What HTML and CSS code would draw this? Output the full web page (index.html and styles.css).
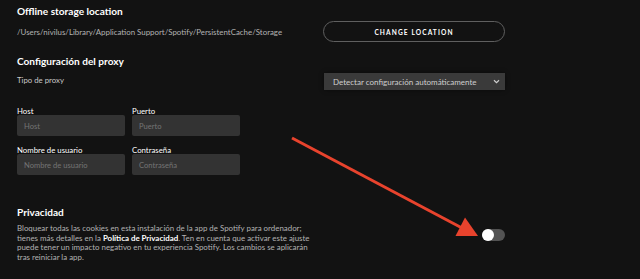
FILE: index.html
```html
<!DOCTYPE html>
<html lang="es">
<head>
<meta charset="utf-8">
<link rel="stylesheet" href="styles.css">
</head>
<body>
<div class="page">
  <section class="section">
    <h2 class="heading">Offline storage location</h2>
    <div class="row">
      <span class="path">/Users/nivilus/Library/Application Support/Spotify/PersistentCache/Storage</span>
      <button class="btn-outline">CHANGE LOCATION</button>
    </div>
  </section>

  <section class="section proxy">
    <h2 class="heading">Configuración del proxy</h2>
    <div class="row row-select">
      <span class="label-muted">Tipo de proxy</span>
      <div class="select">
        <span>Detectar configuración automáticamente</span>
        <svg class="chev" width="7" height="5" viewBox="0 0 7 5"><path d="M1 1.2 L3.5 3.6 L6 1.2" fill="none" stroke="#cfcfcf" stroke-width="1.2"/></svg>
      </div>
    </div>
    <div class="fields">
      <label class="field"><span class="field-label">Host</span><span class="input">Host</span></label>
      <label class="field"><span class="field-label">Puerto</span><span class="input">Puerto</span></label>
      <label class="field"><span class="field-label">Nombre de usuario</span><span class="input">Nombre de usuario</span></label>
      <label class="field"><span class="field-label">Contraseña</span><span class="input">Contraseña</span></label>
    </div>
  </section>

  <section class="section privacy">
    <h2 class="heading">Privacidad</h2>
    <div class="row row-privacy">
      <p class="desc">Bloquear todas las cookies en esta instalación de la app de Spotify para ordenador; tienes más detalles en la <strong>Política de Privacidad</strong>. Ten en cuenta que activar este ajuste puede tener un impacto negativo en tu experiencia Spotify. Los cambios se aplicarán tras reiniciar la app.</p>
      <span class="toggle"><span class="knob"></span></span>
    </div>
  </section>
</div>
<svg class="arrow" width="640" height="279" viewBox="0 0 640 279">
  <line x1="292" y1="138" x2="462" y2="228" stroke="#e8432d" stroke-width="3" stroke-linecap="butt"/>
  <polygon points="478,236 455.5,236 465,217.5" fill="#e8432d"/>
</svg>
</body>
</html>
```
FILE: styles.css
```css
html, body {
  margin: 0;
  padding: 0;
  background: #121212;
}
body {
  width: 640px;
  height: 279px;
  overflow: hidden;
  position: relative;
  font-family: Lato, "Liberation Sans", sans-serif;
  color: #fff;
}
.page {
  width: 488px;
  padding: 4px 0 0 17px;
}
.heading {
  margin: 0;
  font-size: 10.1px;
  font-weight: 700;
  line-height: 14px;
  color: #fff;
}
.row {
  display: flex;
  justify-content: space-between;
  align-items: center;
}
.section:first-child .row {
  margin-top: 3px;
}
.path {
  font-size: 7.9px;
  color: #b3b3b3;
}
.btn-outline {
  width: 182px;
  height: 21px;
  border: 1px solid #5f5f5f;
  border-radius: 11px;
  background: transparent;
  color: #fff;
  font-family: inherit;
  font-size: 6.6px;
  font-weight: 700;
  letter-spacing: 1.1px;
  padding: 0;
}
.proxy {
  margin-top: 12px;
}
.row-select {
  margin-top: 6px;
  align-items: flex-start;
}
.label-muted {
  font-size: 7.8px;
  color: #c8c8c8;
  margin-top: 1px;
}
.select {
  width: 181px;
  height: 17px;
  margin-top: -1px;
  background: #3a3a3a;
  display: flex;
  align-items: center;
  justify-content: space-between;
  padding: 0 5px 0 9px;
  box-sizing: border-box;
  font-size: 8px;
  color: #cfcfcf;
  box-shadow: 0 0 4px rgba(0,0,0,.5);
}
.fields {
  margin-top: 16px;
  display: grid;
  grid-template-columns: 108px 108px;
  column-gap: 7px;
  row-gap: 9px;
}
.field {
  display: flex;
  flex-direction: column;
}
.field-label {
  font-size: 7.8px;
  color: #fff;
  line-height: 10px;
}
.input {
  margin-top: -1px;
  height: 21px;
  background: #333;
  border-radius: 2px;
  box-sizing: border-box;
  padding: 0 7px;
  display: flex;
  align-items: center;
  font-size: 7.6px;
  color: #737373;
}
.privacy {
  margin-top: 30px;
}
.row-privacy {
  margin-top: 5px;
  align-items: flex-start;
}
.desc {
  margin: 0;
  width: 300px;
  font-size: 7.9px;
  line-height: 9.7px;
  color: #b3b3b3;
}
.desc strong {
  color: #fff;
  font-weight: 700;
}
.toggle {
  margin-top: 5px;
  width: 23px;
  height: 12px;
  border-radius: 6px;
  background: #535353;
  position: relative;
}
.knob {
  position: absolute;
  left: 0;
  top: 0;
  width: 12px;
  height: 12px;
  border-radius: 50%;
  background: #fff;
}
.arrow {
  position: absolute;
  left: 0;
  top: 0;
  pointer-events: none;
}
```
